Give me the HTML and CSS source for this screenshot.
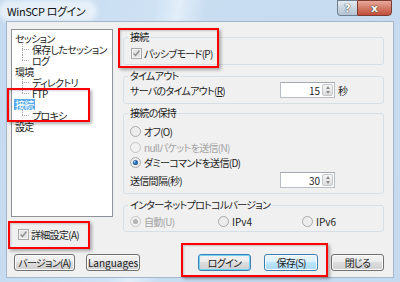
FILE: index.html
```html
<!DOCTYPE html>
<html lang="ja">
<head>
    <meta charset="UTF-8">
    <title>WinSCP ログイン</title>
    <link rel="stylesheet" href="styles.css">
</head>
<body>
    <div class="window">
        <div class="titlebar">
            <span class="title">WinSCP ログイン</span>
            <div class="caption-buttons">
                <span class="cap help">?</span>
                <span class="cap close">x</span>
            </div>
        </div>

        <div class="client">
            <div class="main">
                <!-- left: page tree -->
                <div class="side">
                    <ul class="tree">
                        <li>セッション</li>
                        <li class="child">保存したセッション</li>
                        <li class="child last">ログ</li>
                        <li>環境</li>
                        <li class="child">ディレクトリ</li>
                        <li class="child last">FTP</li>
                        <li><span class="selected">接続</span></li>
                        <li class="child last">プロキシ</li>
                        <li>設定</li>
                    </ul>
                    <label class="check adv">
                        <svg class="box" width="11" height="11" viewBox="0 0 11 11"><rect x=".5" y=".5" width="10" height="10" fill="#f4f4f4" stroke="#a9a9a9"/><rect x="2" y="2" width="7" height="7" fill="#e4e4e4"/><path d="M2.6 5.4l2 2.1 3.8-5" fill="none" stroke="#8e8e8e" stroke-width="1.4"/></svg>
                        詳細設定(A)
                    </label>
                </div>

                <!-- right: connection page -->
                <div class="panel">
                    <fieldset class="group g-conn">
                        <legend>接続</legend>
                        <label class="check passive">
                            <svg class="box" width="11" height="11" viewBox="0 0 11 11"><rect x=".5" y=".5" width="10" height="10" fill="#f4f4f4" stroke="#a9a9a9"/><rect x="2" y="2" width="7" height="7" fill="#e4e4e4"/><path d="M2.6 5.4l2 2.1 3.8-5" fill="none" stroke="#8e8e8e" stroke-width="1.4"/></svg>
                            パッシブモード(P)
                        </label>
                    </fieldset>

                    <fieldset class="group g-timeout">
                        <legend>タイムアウト</legend>
                        <div class="field-row">
                            <span class="field-label">サーバのタイムアウト(<u>R</u>)</span>
                            <span class="spin">
                                <span class="spin-value">15</span>
                                <span class="spin-arrows"><i class="up"></i><i class="down"></i></span>
                            </span>
                            <span class="unit">秒</span>
                        </div>
                    </fieldset>

                    <fieldset class="group g-keep">
                        <legend>接続の保持</legend>
                        <label class="radio-row">
                            <svg class="radio" width="11" height="11" viewBox="0 0 11 11"><circle cx="5.5" cy="5.5" r="5" fill="#ededed" stroke="#a9a9a9"/></svg>
                            オフ(O)
                        </label>
                        <label class="radio-row disabled">
                            <svg class="radio" width="11" height="11" viewBox="0 0 11 11"><circle cx="5.5" cy="5.5" r="5" fill="#f2f2f2" stroke="#c4c4c4"/></svg>
                            nullパケットを送信(N)
                        </label>
                        <label class="radio-row">
                            <svg class="radio" width="11" height="11" viewBox="0 0 11 11"><circle cx="5.5" cy="5.5" r="5" fill="#ededed" stroke="#a9a9a9"/><circle cx="5.5" cy="5.5" r="2.6" fill="#2a6aa8"/><circle cx="4.8" cy="4.8" r="1" fill="#8fc4ef"/></svg>
                            ダミーコマンドを送信(D)
                        </label>
                        <div class="field-row interval">
                            <span class="field-label">送信間隔(秒)</span>
                            <span class="spin">
                                <span class="spin-value">30</span>
                                <span class="spin-arrows"><i class="up"></i><i class="down"></i></span>
                            </span>
                        </div>
                    </fieldset>

                    <fieldset class="group g-ip">
                        <legend>インターネットプロトコルバージョン</legend>
                        <div class="ip-row">
                            <label class="radio-row disabled">
                                <svg class="radio" width="11" height="11" viewBox="0 0 11 11"><circle cx="5.5" cy="5.5" r="5" fill="#f2f2f2" stroke="#c4c4c4"/><circle cx="5.5" cy="5.5" r="2.6" fill="#b4b4b4"/></svg>
                                自動(U)
                            </label>
                            <label class="radio-row latin">
                                <svg class="radio" width="11" height="11" viewBox="0 0 11 11"><circle cx="5.5" cy="5.5" r="5" fill="#ededed" stroke="#a9a9a9"/></svg>
                                IPv4
                            </label>
                            <label class="radio-row latin">
                                <svg class="radio" width="11" height="11" viewBox="0 0 11 11"><circle cx="5.5" cy="5.5" r="5" fill="#ededed" stroke="#a9a9a9"/></svg>
                                IPv6
                            </label>
                        </div>
                    </fieldset>
                </div>
            </div>

            <div class="buttons">
                <button class="btn btn-version">バージョン(A)</button>
                <button class="btn btn-lang">Languages</button>
                <button class="btn btn-login default">ログイン</button>
                <button class="btn btn-save hover">保存(S)</button>
                <button class="btn btn-close">閉じる</button>
            </div>
        </div>

        <!-- red annotation frames -->
        <div class="mark mark-tree"></div>
        <div class="mark mark-passive"></div>
        <div class="mark mark-adv"></div>
        <div class="mark mark-buttons"></div>
    </div>
</body>
</html>
```

FILE: styles.css
```css
* {
    margin: 0;
    padding: 0;
    box-sizing: border-box;
}

body {
    width: 400px;
    height: 282px;
    overflow: hidden;
    font-family: "Noto Sans CJK JP", "Noto Sans", sans-serif;
    font-size: 10px;
    letter-spacing: -0.7px;
    font-feature-settings: "palt";
    color: #1c1c1c;
}

.window {
    position: relative;
    width: 400px;
    height: 282px;
    padding: 0 6px 4px;
    display: flex;
    flex-direction: column;
    background: linear-gradient(100deg, #c3d9ef 0%, #cfe2f4 35%, #e2eef9 40%, #c9ddf1 46%, #c5daef 100%);
}

.titlebar {
    height: 21px;
    display: flex;
    justify-content: space-between;
    align-items: flex-start;
}

.title {
    margin: 3px 0 0 -5px;
    padding: 1px 9px 1px 6px;
    font-size: 11px;
    letter-spacing: -0.4px;
    line-height: 14px;
    color: #111;
    background: rgba(255, 255, 255, 0.55);
    border-radius: 9px;
    box-shadow: 0 0 5px 3px rgba(255, 255, 255, 0.55);
}

.caption-buttons {
    display: flex;
    margin-right: 2px;
}

.cap {
    height: 16px;
    display: flex;
    align-items: center;
    justify-content: center;
    font-family: "DejaVu Sans", sans-serif;
    font-weight: bold;
    font-size: 11px;
    letter-spacing: 0;
    color: #fff;
    text-shadow: 0 0 1px #333, 0 0 1px #333;
}

.help {
    width: 20px;
    border: 1px solid #6f7f90;
    border-right: none;
    border-radius: 0 0 0 4px;
    background: linear-gradient(#e4ebf2, #c9d5e1 50%, #b4c3d3);
}

.close {
    width: 35px;
    border: 1px solid #7c3b30;
    border-radius: 0 0 4px 0;
    background: linear-gradient(#e9a99a, #d27a68 50%, #c24e3a);
}

.client {
    flex: 1;
    display: flex;
    flex-direction: column;
    padding: 7px 9px 6px 4px;
    background: #f0f0f0;
    border: 1px solid #a3b6ca;
}

.main {
    flex: 1;
    display: flex;
    gap: 10px;
}

.side {
    width: 102px;
    display: flex;
    flex-direction: column;
}

.tree {
    height: 188px;
    list-style: none;
    padding: 3px 0 0 3px;
    background: #fff;
    border: 1px solid #8e939b;
}

.tree li {
    height: 11px;
    line-height: 11px;
    white-space: nowrap;
}

.tree .child {
    padding-left: 17px;
    background:
        repeating-linear-gradient(to right, #a4a4a4 0 1px, transparent 1px 2px) no-repeat 7px 50% / 7px 1px,
        repeating-linear-gradient(to bottom, #a4a4a4 0 1px, transparent 1px 2px) no-repeat 7px 0 / 1px 100%;
}

.tree .child.last {
    background:
        repeating-linear-gradient(to right, #a4a4a4 0 1px, transparent 1px 2px) no-repeat 7px 50% / 7px 1px,
        repeating-linear-gradient(to bottom, #a4a4a4 0 1px, transparent 1px 2px) no-repeat 7px 0 / 1px 50%;
}

.selected {
    display: inline-block;
    padding: 0 1px;
    margin-left: -1px;
    background: #55a9ec;
    color: #fff;
}

.check {
    display: flex;
    align-items: center;
    gap: 2px;
    height: 12px;
    white-space: nowrap;
}

.adv {
    margin-top: 11px;
    padding-left: 7px;
}

.panel {
    flex: 1;
    display: flex;
    flex-direction: column;
}

.group {
    border: 1px solid #d5dfe5;
    border-radius: 3px;
    padding: 0 6px;
}

.group legend {
    height: 12px;
    line-height: 12px;
    padding: 0 2px;
    margin-left: -2px;
    white-space: nowrap;
}

.g-conn {
    margin-top: 2px;
    padding-top: 4px;
    padding-bottom: 5px;
}

.passive {
    margin-left: 1px;
}

.g-timeout {
    margin-top: 5px;
    padding-bottom: 5px;
}

.g-keep {
    margin-top: 3px;
    padding-top: 5px;
    padding-bottom: 5px;
}

.g-ip {
    margin-top: 5px;
    padding-top: 3px;
    padding-bottom: 3px;
}

.field-row {
    height: 16px;
    display: flex;
    align-items: center;
}

.field-label {
    width: 150px;
    white-space: nowrap;
}

.interval {
    margin-top: 1.5px;
}

.radio-row {
    height: 15.5px;
    display: flex;
    align-items: center;
    gap: 3px;
    white-space: nowrap;
}

.radio-row.disabled {
    color: #a3a3a3;
}

.radio-row.latin {
    letter-spacing: 0;
}

.ip-row {
    display: grid;
    grid-template-columns: 88px 84px auto;
}

.ip-row .radio-row {
    height: 14px;
}

.spin {
    width: 55px;
    height: 16px;
    display: flex;
    align-items: center;
    background: #fff;
    border: 1px solid #b8bcc4;
    border-top-color: #a4a8b0;
    padding: 0 1px 0 2px;
    letter-spacing: 0;
}

.spin-value {
    flex: 1;
    text-align: right;
    padding-right: 2px;
}

.spin-arrows {
    width: 11px;
    height: 12px;
    display: flex;
    flex-direction: column;
    border: 1px solid #c3c7cc;
    border-radius: 2px;
    background: linear-gradient(#f6f6f6, #dedede);
}

.spin-arrows i {
    flex: 1;
    display: flex;
    align-items: center;
    justify-content: center;
}

.spin-arrows i::before {
    content: "";
    border-left: 2.5px solid transparent;
    border-right: 2.5px solid transparent;
}

.spin-arrows .up::before {
    border-bottom: 3px solid #8a8a8a;
}

.spin-arrows .down::before {
    border-top: 3px solid #8a8a8a;
}

.unit {
    margin-left: 3px;
}

.buttons {
    height: 17px;
    display: flex;
    padding-left: 3px;
}

.btn {
    height: 17px;
    padding: 0;
    white-space: nowrap;
    font: inherit;
    letter-spacing: inherit;
    color: #1c1c1c;
    border: 1px solid #707070;
    border-radius: 3px;
    background: linear-gradient(#f3f3f3 0%, #ebebeb 50%, #dddddd 50%, #cfcfcf 100%);
    box-shadow: inset 0 0 0 1px #fbfbfb;
}

.btn-version {
    width: 61px;
}

.btn-lang {
    width: 54px;
    margin-left: 11px;
    letter-spacing: 0;
}

.btn-login {
    width: 53px;
    margin-left: auto;
}

.btn-save {
    width: 54px;
    margin-left: 13px;
}

.btn-close {
    width: 53px;
    margin-left: 13px;
}

.btn.default {
    border-color: #3c7fb1;
    box-shadow: inset 0 0 0 1px #6fd4f8;
}

.btn.hover {
    border-color: #3c7fb1;
    background: linear-gradient(#eaf6fd 0%, #d9f0fc 50%, #bee6fd 50%, #a7d9f5 100%);
}

/* annotation frames drawn over the dialog */
.mark {
    position: absolute;
    border: 2px solid #f00;
    box-shadow: 2px 2px 3px rgba(0, 0, 0, 0.3), inset 1px 1px 2px rgba(0, 0, 0, 0.18);
}

.mark-tree {
    left: 7px;
    top: 88px;
    width: 83px;
    height: 34px;
}

.mark-passive {
    left: 118px;
    top: 28px;
    width: 101px;
    height: 40px;
}

.mark-adv {
    left: 8px;
    top: 221px;
    width: 82px;
    height: 28px;
}

.mark-buttons {
    left: 181px;
    top: 243px;
    width: 147px;
    height: 34px;
}
```
